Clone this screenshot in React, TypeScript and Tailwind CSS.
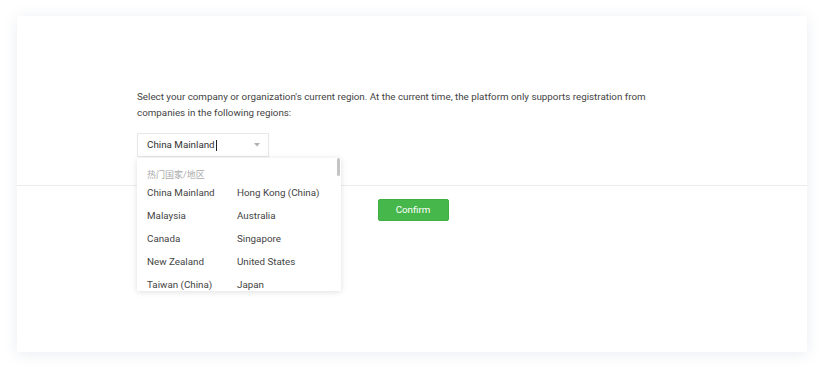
import { useState } from "react"

const regions = [
  ["China Mainland", "Hong Kong (China)"],
  ["Malaysia", "Australia"],
  ["Canada", "Singapore"],
  ["New Zealand", "United States"],
  ["Taiwan (China)", "Japan"],
]

export default function App() {
  const [value] = useState("China Mainland")

  return (
    <div className="min-h-[368px] bg-white p-4 pl-[17px] font-['Roboto',sans-serif] text-[9.8px] text-[#333]">
      <div className="h-[336px] w-[790px] bg-white shadow-[0_2px_14px_rgba(60,80,130,0.10)]">
        <div className="h-[170px] border-b border-[#ececec] pl-[120px] pt-[73px]">
          <p className="w-[520px] leading-[15.5px] text-[#444]">
            Select your company or organization's current region. At the current time, the platform only supports registration from
            companies in the following regions:
          </p>

          <div className="relative mt-[13px] w-[132px]">
            <div className="flex h-[24px] items-center justify-between border border-[#e8e8e8] pl-[9px] pr-[8px] shadow-[0_1px_2px_rgba(0,0,0,0.03)]">
              <span className="flex items-center text-[#333]">
                {value}
                <span className="ml-px inline-block h-[11px] w-px bg-[#222]" />
              </span>
              <svg width="6" height="4" viewBox="0 0 6 4">
                <path d="M0 0h6L3 3.5z" fill="#b0b0b0" />
              </svg>
            </div>

            <div className="absolute left-0 top-[25px] z-10 h-[133px] w-[204px] overflow-hidden bg-white shadow-[0_1px_6px_rgba(0,0,0,0.13)]">
              <div className="absolute right-[1px] top-0 h-[18px] w-[3px] rounded-sm bg-[#c4c4c4]" />
              <div className="px-[10px] pt-[10px] font-['Roboto','Noto_Sans_CJK_SC',sans-serif] text-[9px] leading-[14px] text-[#aaa]">
                热门国家/地区
              </div>
              <div className="px-[10px]">
                {regions.map(([a, b]) => (
                  <div key={a} className="grid h-[23px] grid-cols-[90px_90px] items-center text-[#444]">
                    <span>{a}</span>
                    <span>{b}</span>
                  </div>
                ))}
              </div>
            </div>
          </div>
        </div>

        <div className="flex justify-center pt-[13px]">
          <button className="ml-[2px] h-[22px] w-[71px] rounded-[2px] border border-[#3fae43] bg-[#46b74a] text-white">
            Confirm
          </button>
        </div>
      </div>
    </div>
  )
}
